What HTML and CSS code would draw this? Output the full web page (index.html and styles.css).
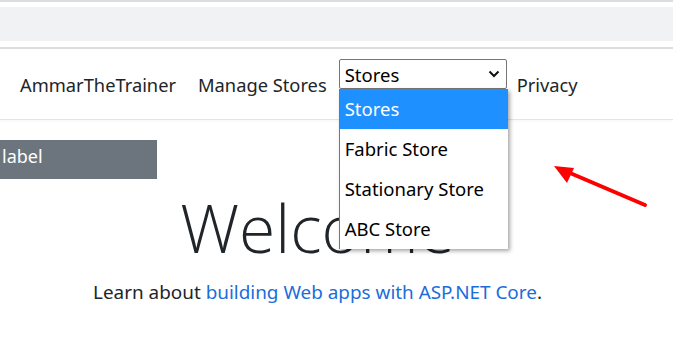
FILE: index.html
```html
<!DOCTYPE html>
<html>
<head>
<meta charset="utf-8">
<link rel="stylesheet" href="styles.css">
</head>
<body>
<div class="chrome">
  <div class="chrome-line"></div>
  <div class="chrome-band"></div>
  <div class="chrome-line2"></div>
</div>
<nav class="nav">
  <span class="nav-text brand">AmmarTheTrainer</span>
  <span class="nav-text manage">Manage Stores</span>
  <div class="select-wrap">
    <div class="select">
      <span>Stores</span>
      <svg class="chev" width="12" height="8" viewBox="0 0 12 8"><path d="M1.5 1.5 L6 6 L10.5 1.5" fill="none" stroke="#111" stroke-width="2"/></svg>
    </div>
    <ul class="options">
      <li class="opt active">Stores</li>
      <li class="opt">Fabric Store</li>
      <li class="opt">Stationary Store</li>
      <li class="opt">ABC Store</li>
    </ul>
  </div>
  <span class="nav-text privacy">Privacy</span>
</nav>
<main class="main">
  <div class="label">label</div>
  <div class="center">
    <h1 class="welcome">Welcome</h1>
    <p class="learn">Learn about <a href="#">building Web apps with ASP.NET Core</a>.</p>
  </div>
</main>
<svg class="arrow" width="120" height="60" viewBox="0 0 120 60">
  <line x1="102" y1="47" x2="20" y2="12" stroke="#ff0000" stroke-width="4" stroke-linecap="round"/>
  <polygon points="11,8 31,10 24,25" fill="#ff0000"/>
</svg>
</body>
</html>
```
FILE: styles.css
```css
html, body { margin: 0; padding: 0; background: #fff; }
body {
  font-family: "Noto Sans", "Open Sans", sans-serif;
  color: #212529;
  position: relative;
  width: 673px;
  height: 347px;
  overflow: hidden;
}
.chrome-line { height: 2px; background: #dcdde0; }
.chrome-band { height: 34px; margin-top: 5px; background: #f1f2f4; }
.chrome-line2 { height: 2px; margin-top: 6px; background: #dcdde0; }

.nav {
  display: flex;
  align-items: flex-start;
  height: 71px;
  border-bottom: 1px solid #e5e5e5;
  box-shadow: 0 1px 3px rgba(0,0,0,0.04);
  padding-left: 20px;
  box-sizing: border-box;
}
.nav-text {
  font-size: 18.3px;
  line-height: 26px;
  margin-top: 23px;
  color: #212529;
  white-space: nowrap;
}
.manage { margin-left: 22px; }
.select-wrap {
  position: relative;
  margin-left: 12px;
  margin-top: 10px;
}
.select {
  width: 168px;
  height: 30px;
  box-sizing: border-box;
  border: 1px solid #767676;
  border-radius: 2px;
  background: #fff;
  display: flex;
  align-items: center;
  justify-content: space-between;
  padding: 0 5px 0 5px;
  font-size: 18.5px;
  color: #000;
}
.chev { margin-right: 1px; }
.options {
  position: absolute;
  top: 30px;
  left: 0;
  width: 168px;
  margin: 0;
  padding: 0;
  list-style: none;
  background: #fff;
  border-left: 1px solid #767676;
  box-shadow: 2px 2px 4px rgba(0,0,0,0.35);
  z-index: 5;
}
.opt {
  height: 40px;
  line-height: 40px;
  font-size: 18.5px;
  padding-left: 5px;
  color: #000;
}
.opt.active { background: #1e90ff; color: #fff; }
.privacy { margin-left: 10px; }

.main { width: 635px; }
.label {
  margin-top: 20px;
  width: 157px;
  height: 39px;
  background: #6c757d;
  color: #fff;
  font-size: 18px;
  line-height: 32px;
  padding-left: 2px;
  box-sizing: border-box;
}
.center { text-align: center; }
.welcome {
  margin: 8px 0 0 0;
  font-family: "Open Sans", sans-serif;
  font-weight: 300;
  font-size: 66px;
  line-height: 80px;
  color: #212529;
}
.learn {
  margin: 12px 0 0 0;
  font-size: 18.9px;
  line-height: 26px;
}
.learn a { color: #1a6ddb; text-decoration: none; }
.arrow { position: absolute; left: 543px; top: 158px; }
```
